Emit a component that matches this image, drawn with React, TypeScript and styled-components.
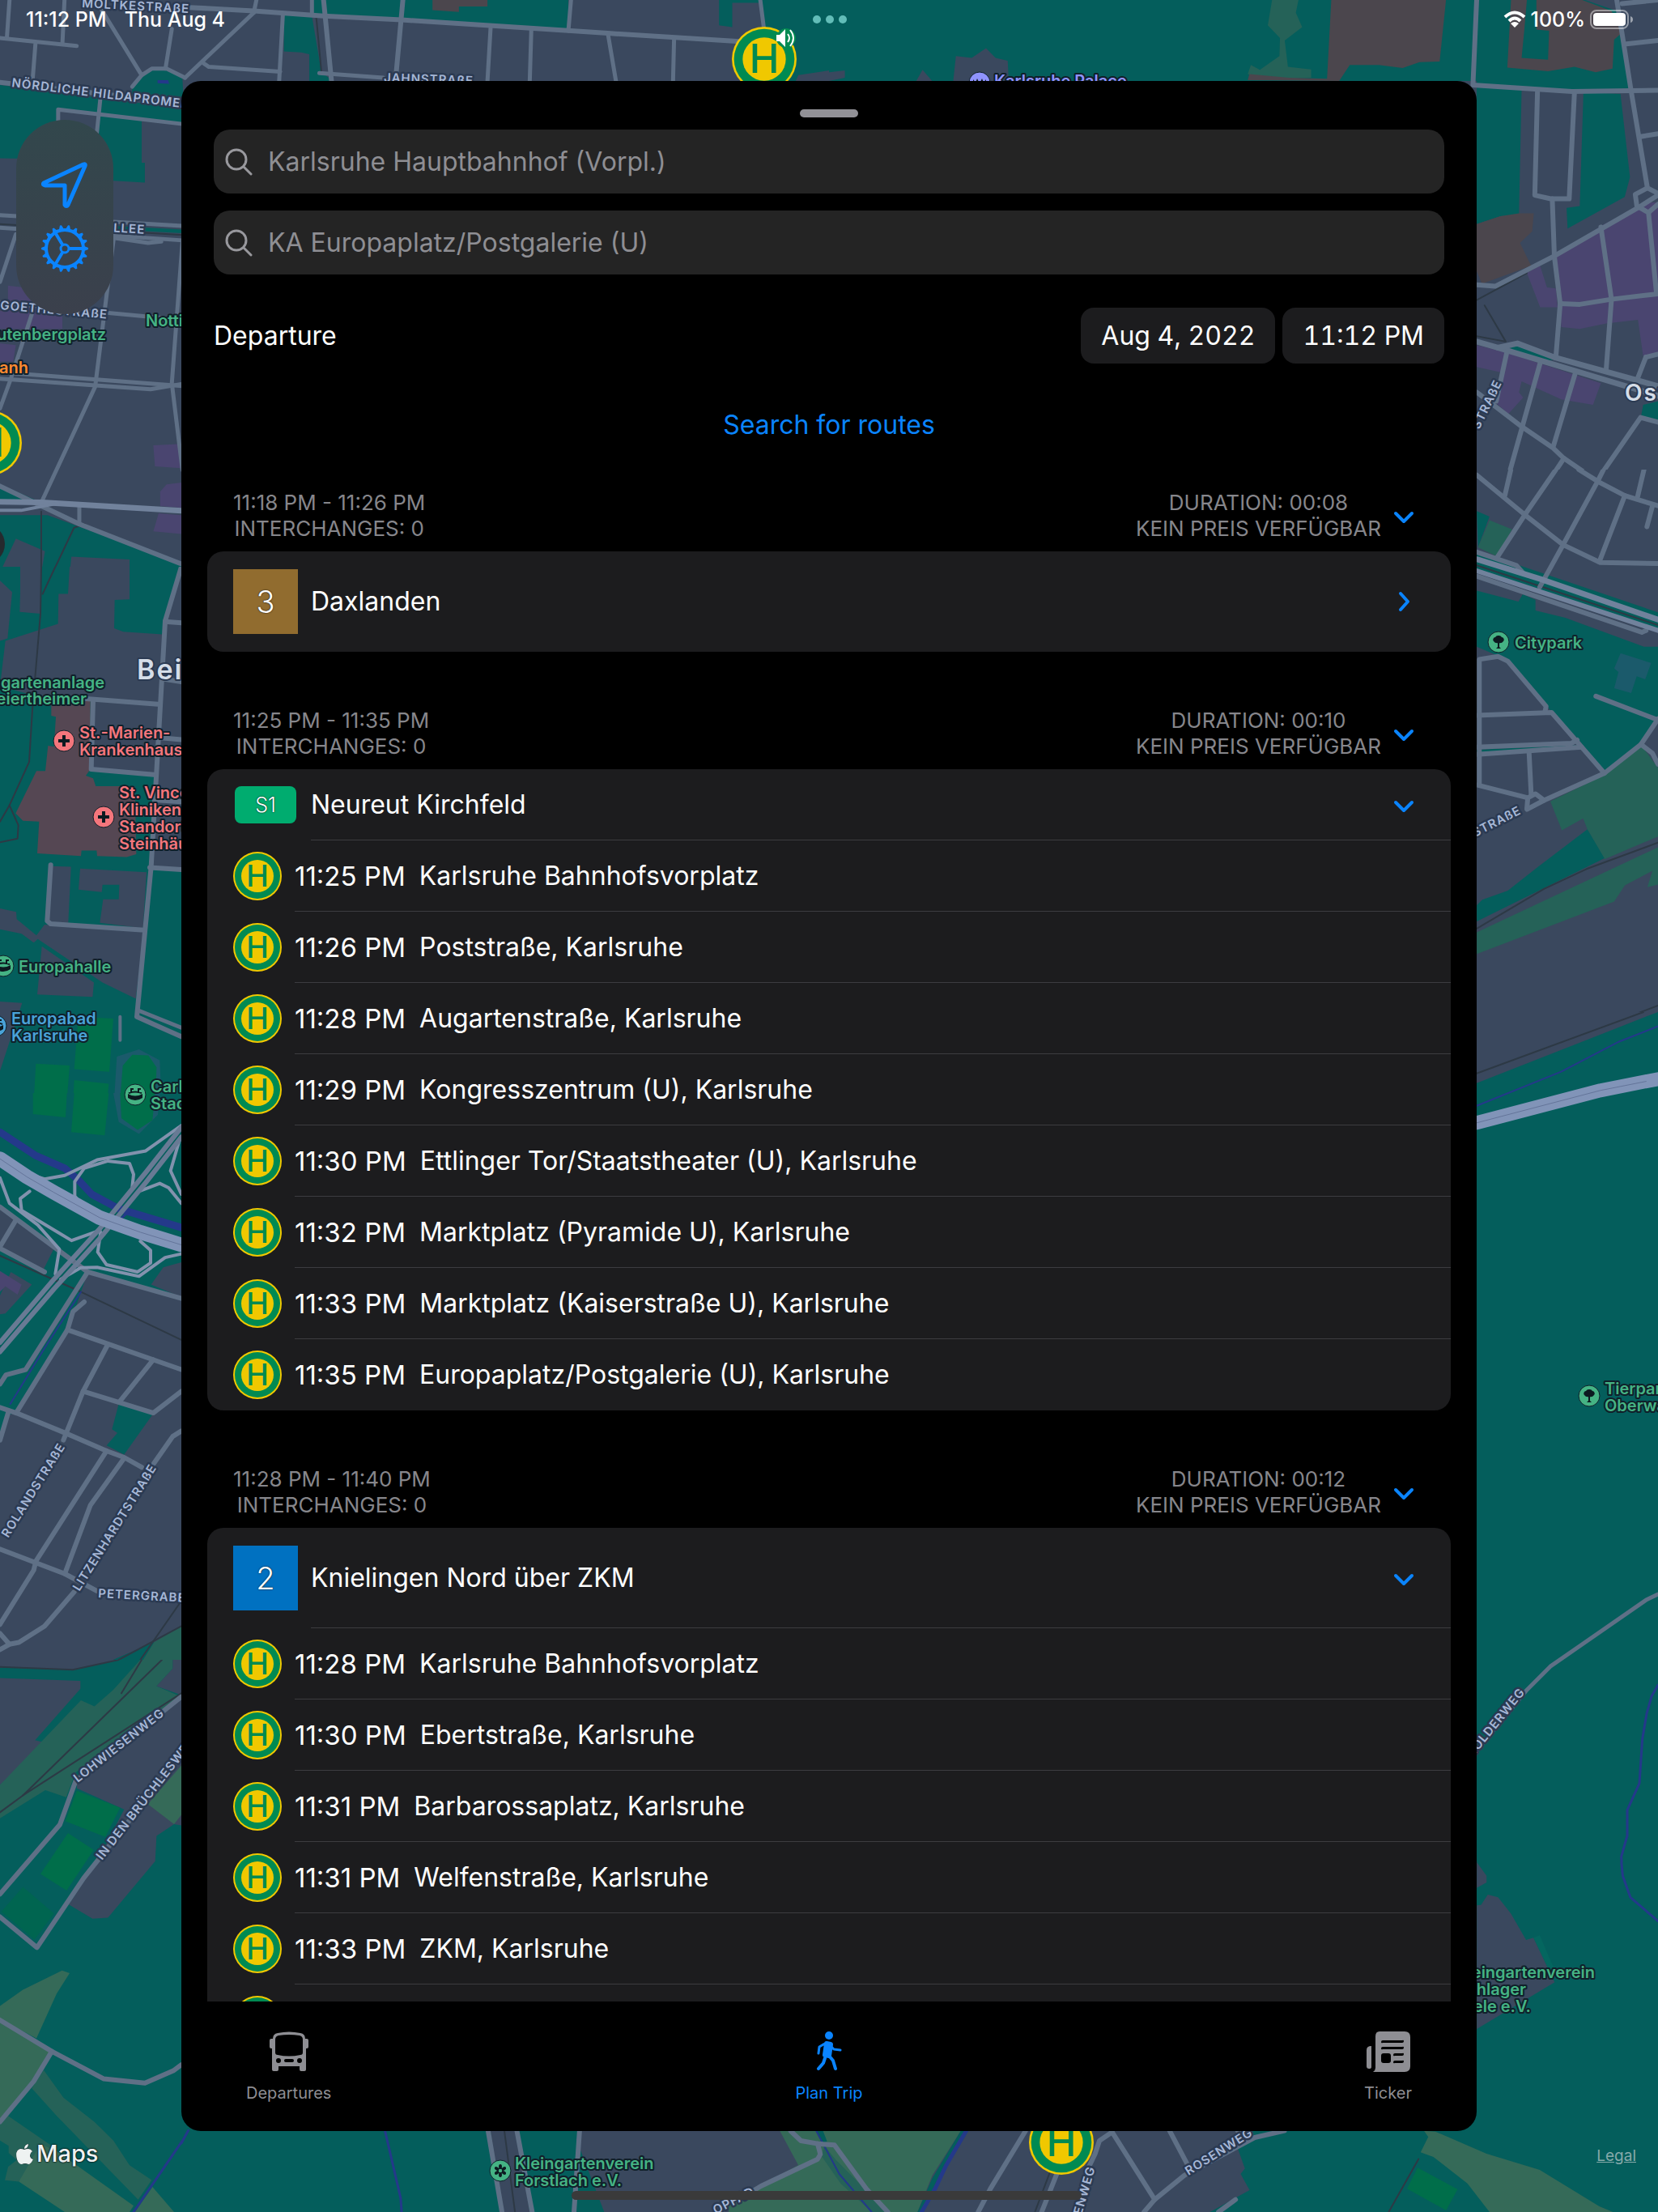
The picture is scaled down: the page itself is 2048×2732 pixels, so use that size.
import React, { useState } from "react";
import styled, { createGlobalStyle } from "styled-components";

/* ---------- palette ---------- */

const c = {
  blue: "#0a84ff",
  grey: "#8e8e93",
  card: "#1c1c1e",
  line: "#3c3c40",
  land: "#3a485e",
  park: "#045e5c",
  road: "#5f7086",
  meadow: "#356a58",
  grove: "#256258",
  pitch: "#006e4a",
  shop: "#4a4570",
  brown: "#4b464d",
  hospital: "#554753",
  track: "#1b5a6b",
  motorway: "#8194b8",
  ramp: "#8292ad",
  water: "#24398a",
  rail: "#2d3945",
};

const GlobalStyle = createGlobalStyle`
  *, *::before, *::after { box-sizing: border-box; }
  body {
    margin: 0;
    background: ${c.land};
    color: #fff;
    font-family: Inter, "Liberation Sans", sans-serif;
  }
  button, input { font: inherit; color: inherit; }
  button { background: none; border: 0; padding: 0; cursor: pointer; }
`;

/* ---------- map ---------- */

type Area = [fill: string, points: string];
type Line = [stroke: string, width: number, points: string];
type TileData = {
  x: number;
  y: number;
  w: number;
  h: number;
  vw: number;
  vh: number;
  base: string;
  areas: Area[];
  lines: Line[];
};

const roads = (width: number, ...points: string[]): Line[] => points.map((p) => [c.road, width, p]);
const ramps = (...points: string[]): Line[] => points.map((p) => [c.ramp, 4, p]);
const rails = (...points: string[]): Line[] => points.map((p) => [c.rail, 2, p]);

const tiles: TileData[] = [
  {
    x: 0, y: 0, w: 1024, h: 700, vw: 1568, vh: 1568, base: c.land,
    areas: [
      [c.park, "0,235 345,300 345,345 268,335 268,450 274,450 274,505 215,500 185,480 185,315 110,303 108,440 0,438"],
      [c.park, "250,245 262,215 285,195 315,190 345,215 348,300 250,270"],
      [c.park, "590,0 1075,0 1075,82 590,42"],
      [c.park, "537,40 590,45 608,200 630,224 585,224 585,150 570,145 537,142"],
      [c.park, "1325,0 1568,0 1568,224 1445,224 1445,90 1440,8 1385,8 1385,75 1360,70 1360,0"],
      [c.land, "1510,208 1568,195 1568,224 1505,224"],
      [c.brown, "818,0 922,0 922,18 868,18 868,33 818,28"],
      [c.water, "298,222 318,222 320,232 298,230"],
      [c.park, "215,625 345,635 345,645 215,635"],
      [c.park, "0,1340 70,1385 0,1385"],
      [c.park, "0,1425 90,1425 343,1560 343,1568 0,1568"],
      [c.land, "30,1490 85,1525 80,1568 5,1568"],
      [c.land, "135,1540 245,1548 245,1568 133,1568"],
      [c.shop, "15,790 75,800 118,870 118,910 0,910 0,860 15,850"],
      [c.shop, "0,950 30,955 25,1000 0,1000"],
      [c.shop, "290,1232 343,1228 343,1295 293,1290"],
      [c.shop, "315,1340 343,1335 343,1405 303,1400 303,1360"],
      [c.shop, "300,1420 343,1425 343,1477 290,1470"],
    ],
    lines: [
      ...rails("0,620 345,650", "78,1415 78,1568", "105,1568 140,1460 160,1450", "598,45 608,200"),
      ...roads(5,
        "0,105 145,127", "18,0 13,105", "122,0 118,122", "67,122 62,215", "190,22 268,208", "325,80 313,190",
        "480,35 350,215", "385,175 395,185 530,198", "485,0 480,35", "250,240 268,208 287,190 315,190 350,215",
        "535,40 528,224", "604,202 725,215", "928,75 922,224", "1005,80 1002,224", "1080,0 1075,85",
        "1150,95 1165,224", "1275,105 1273,224", "1438,0 1445,80", "110,340 110,303 345,343", "190,270 183,370",
        "0,595 345,625", "0,630 345,665", "215,658 280,672 305,668", "30,648 0,780", "0,838 345,885",
        "215,660 180,1070 75,1400", "345,670 325,1060 345,1300", "0,1030 345,1068", "0,1048 285,1077 345,1062",
        "60,870 20,1050 0,1130", "150,1400 150,1450", "590,0 590,40"),
      ...roads(6, "350,20 480,30 612,44 760,55 1080,85 1150,92 1400,115", "0,228 345,285", "612,0 615,44 627,224",
        "762,0 748,224", "0,1345 150,1450 343,1560"),
      ["#71829c", 7, "0,1388 80,1390 343,1413"],
      ["#71829c", 4, "0,1412 40,1412 110,1392"],
    ],
  },
  {
    x: 1024, y: 0, w: 1024, h: 700, vw: 1568, vh: 1568, base: c.land,
    areas: [
      [c.park, "0,0 1430,0 1490,30 1515,250 1310,250 1305,595 1270,598 1225,620 1225,224 0,224"],
      [c.land, "240,155 270,160 297,133 315,160 338,168 340,224 235,224"],
      [c.land, "0,200 30,195 30,215 0,224"],
      [c.land, "165,224 177,193 195,224"],
      [c.grove, "838,0 888,0 883,35 895,75 862,112 868,185 912,192 912,215 830,218 792,205 798,180 815,193 852,155 853,105 830,70"],
      [c.brown, "950,0 1167,0 1155,170 1117,172 1085,188 1040,180 985,180 965,224 792,222 795,205 870,215 942,218"],
      [c.brown, "1290,0 1320,0 1315,85 1310,160 1360,165 1362,85 1338,82 1338,0 1425,0 1480,30 1500,90 1485,110 1482,190 1450,200 1410,185 1360,197 1283,187"],
      [c.park, "1427,255 1497,260 1515,490 1505,545 1397,632 1395,575 1420,570"],
      [c.brown, "1225,620 1270,598 1305,590 1333,590 1330,640 1307,672 1328,735 1235,785 1225,750"],
      [c.shop, "1568,560 1545,560 1460,625 1375,710 1383,840 1385,905 1420,910 1470,895 1530,885 1540,985 1568,975"],
      [c.shop, "1320,755 1345,735 1358,795 1375,798 1378,850 1345,850"],
      [c.shop, "1225,955 1280,975 1460,1060 1445,1120 1385,1105 1310,1055 1305,1085 1313,1100 1285,1145 1262,1115 1270,1030 1225,1015"],
      [c.park, "1275,955 1300,955 1370,995 1345,1000"],
      [c.park, "1540,1120 1568,1110 1568,1170 1535,1160"],
    ],
    lines: [
      ...rails("1225,830 1320,755", "1240,845 1280,945 1225,930"),
      ...roads(6,
        "1225,0 1218,235 1405,253 1568,250", "1340,255 1335,540 1365,550 1400,550 1410,255",
        "1368,550 1372,710 1383,840 1375,985", "1490,0 1517,250 1548,520 1568,535", "1500,10 1568,0",
        "1505,122 1568,112", "1535,378 1568,370", "1225,788 1260,792 1372,708 1530,575 1568,540",
        "1548,520 1525,538 1528,570 1550,588 1568,565", "1460,628 1480,828 1470,1022", "1550,588 1565,810",
        "1383,840 1420,842 1480,828 1568,813", "1545,988 1568,980", "1545,988 1530,1045", "1282,975 1262,1110",
        "1345,1005 1275,1370", "1412,1030 1370,1235", "1225,1085 1310,1180 1370,1240 1390,1268 1452,1330 1568,1395",
        "1390,1268 1265,1545", "1225,1315 1275,1370 1390,1505", "1568,1168 1535,1155 1452,1330"),
      ...roads(7, "1225,945 1265,962 1568,1095", "1265,962 1302,950 1375,990 1568,1068"),
    ],
  },
  {
    x: 1224, y: 580, w: 824, h: 700, vw: 1568, vh: 1568, base: c.land,
    areas: [
      [c.park, "1142,115 1172,130 1145,215"],
      [c.grove, "1172,140 1225,165 1190,240 1145,215"],
      [c.park, "1142,222 1235,262 1568,395 1568,445 1142,285"],
      [c.park, "1142,335 1240,365 1250,345 1280,360 1280,390 1350,410 1535,490 1568,490 1568,680 1528,760 1442,838 1380,745 1320,675 1305,650 1215,525 1192,515 1142,490"],
      [c.track, "1480,508 1552,535 1538,580 1518,572 1505,618 1465,605 1475,560 1465,550"],
      [c.grove, "1315,918 1442,845 1530,765 1568,825 1568,1015 1442,1078 1402,995 1392,965 1342,998"],
      [c.park, "1402,995 1442,1075 1142,1250 1142,1205 1155,1190 1215,1165 1285,1100"],
      [c.grove, "1568,1045 1142,1280 1142,1340 1465,1195 1490,1150 1555,1110 1543,1155 1568,1148"],
      [c.park, "1410,1568 1568,1500 1568,1568"],
      [c.park, "1142,775 1380,762 1380,772 1142,785"],
    ],
    lines: [
      ...rails("1142,265 1568,430", "1142,1270 1300,1160 1400,1105 1568,1032", "1375,1568 1568,1483"),
      [c.water, 2, "1500,1568 1568,1540"],
      ...roads(6,
        "1142,15 1255,125 1345,208 1432,257 1568,260", "1222,0 1208,72", "1328,0 1255,125 1190,243",
        "1382,0 1430,35 1490,72 1568,100", "1440,0 1425,35 1345,208 1290,325", "1535,0 1520,75", "1490,72 1430,255",
        "1555,100 1542,158", "1148,870 1148,525 1192,517 1215,530 1305,655 1302,672",
        "1142,680 1318,672 1442,840 1300,915 1260,940", "1142,768 1365,757 1378,748", "1142,788 1388,768",
        "1265,785 1270,900", "1142,872 1262,908 1260,935", "1262,908 1280,897 1300,915",
        "1442,840 1528,760 1555,785 1568,815", "1528,760 1568,690", "1422,627 1562,690",
        "1142,228 1235,265 1250,285", "1142,295 1530,450 1540,445"),
      ["#71829c", 7, "1142,248 1290,302 1568,415"],
      ["#71829c", 6, "1142,280 1568,445"],
    ],
  },
  {
    x: 0, y: 700, w: 260, h: 700, vw: 780, vh: 1568, base: c.park,
    areas: [
      [c.land, "0,38 45,70 28,198 0,205"],
      [c.land, "75,0 150,0 150,130 73,125 75,70"],
      [c.land, "20,205 215,158 217,75 252,75 258,0 480,0 480,90 425,92 423,170 457,180 603,187 672,0 780,0 780,840 555,835 575,575 335,560 340,370 190,370 0,330"],
      [c.hospital, "190,372 335,372 335,560 318,578 345,585 355,607 500,607 505,795 470,803 360,800 358,785 302,785 300,800 138,793 145,705 85,703 58,682 135,565 168,565 178,495 200,498 207,415 190,412"],
      [c.park, "355,588 420,572 572,578 565,640 500,607 355,607"],
      [c.land, "187,828 263,830 253,985 185,985 175,980"],
      [c.land, "297,835 543,845 530,1000 370,985 382,920 440,920 442,880 380,880 377,900 291,893"],
      [c.land, "0,945 60,955 62,975 135,1020 165,990 535,1005 503,1195 380,1150 140,1030 125,1040 80,1015 0,1003"],
      [c.land, "155,1050 348,1150 343,1190 138,1183"],
      [c.land, "0,1203 82,1207 0,1395"],
      [c.pitch, "290,1245 420,1250 405,1397 275,1390"],
      [c.pitch, "133,1375 258,1380 243,1523 122,1515"],
      [c.pitch, "275,1420 403,1430 388,1568 264,1568"],
      [c.track, "515,1335 592,1365 595,1420 585,1500 570,1568 430,1568 420,1510 433,1355"],
      [c.pitch, "490,1350 550,1352 580,1385 575,1520 550,1550 510,1558 450,1530 443,1490 455,1380"],
    ],
    lines: [
      ...rails("153,0 150,130 120,395 108,540 35,660 0,705", "205,0 158,75", "35,660 68,715 65,752 0,762"),
      ...roads(6,
        "672,0 612,150 560,830 507,1245 672,1300", "612,152 672,155", "600,310 672,318", "320,365 585,380",
        "345,368 338,560 570,575", "580,472 672,478", "572,645 672,650", "555,832 672,838",
        "188,825 175,980 188,988 535,1005"),
      ...roads(5, "515,1228 672,1275"),
      ...roads(4, "445,1245 445,1310"),
    ],
  },
  {
    x: 0, y: 1350, w: 260, h: 700, vw: 780, vh: 1568, base: c.park,
    areas: [
      [c.pitch, "122,0 248,0 243,67 122,58"],
      [c.pitch, "275,0 403,0 388,117 264,108"],
      [c.track, "420,0 593,0 585,60 515,113 440,80"],
      [c.pitch, "445,0 575,0 565,75 510,102 450,70"],
      [c.land, "60,345 200,430 160,490 0,430 0,320"],
      [c.land, "0,560 40,495 118,530 20,610 0,612"],
      [c.shop, "0,492 80,530 65,558 20,535 0,550"],
      [c.land, "672,468 605,482 560,530 672,565"],
      [c.land, "325,495 780,590 780,1460 570,1520 420,1568 0,1568 0,960 35,890 55,885 255,650"],
      [c.park, "440,860 565,890 460,1000 395,975 435,940 415,930"],
      [c.grove, "672,1475 570,1520 530,1568 672,1568"],
      [c.park, "570,1520 530,1568 420,1568"],
    ],
    lines: [
      ...rails("0,450 300,550 672,683", "440,1568 672,1475", "672,1405 520,1568"),
      [c.water, 9, "0,108 130,172 240,208 290,240 340,280 440,320 672,372"],
      [c.water, 2, "300,550 170,700 38,860"],
      [c.water, 3, "445,350 480,325"],
      ...roads(6,
        "0,315 325,495 672,568", "60,350 0,425", "0,430 165,495", "325,495 95,765 22,780 0,805",
        "312,578 270,605 250,655 60,885 0,870", "250,655 672,765", "400,695 308,825 235,960", "568,738 442,855",
        "308,825 568,885 672,825", "30,885 0,960", "60,885 240,940 395,990 460,1008 525,1035",
        "395,990 133,1295 125,1320 0,1470", "460,1010 335,1140 240,1330", "0,1262 240,1330 360,1378",
        "570,1025 640,950 672,935", "275,1380 165,1475 70,1520 35,1525 0,1540", "0,1495 35,1525"),
      ...ramps(
        "110,225 165,238 240,228 360,185 540,160 672,90", "400,188 312,208 277,245 277,285 305,310",
        "400,188 480,195 495,225 490,260", "110,272 75,292 80,325 265,408 370,380",
        "0,235 35,305 140,365 220,432 205,500", "373,385 362,440 395,475 510,495 558,470 558,435 520,410",
        "225,515 300,483 360,482 515,507 612,455 672,445", "665,130 632,215 672,280", "515,272 592,250 625,262 672,305"),
      ["#687a94", 6, "672,95 540,220 370,375 200,515 0,690"],
      ["#687a94", 6, "672,122 540,248 370,402 200,542 0,716"],
      [c.motorway, 18, "0,182 100,232 200,275 370,345 520,385 672,420"],
      ["#64759a", 1, "0,182 100,232 200,275 370,345 520,385 672,420"],
    ],
  },
  {
    x: 0, y: 2050, w: 260, h: 682, vw: 780, vh: 1568, base: c.park,
    areas: [
      [c.land, "0,0 440,0 270,28 0,22"],
      [c.land, "0,52 298,60 298,82 130,228 165,235 0,355"],
      [c.grove, "520,0 640,0 640,25 580,75 672,105 600,140 280,320 245,390 168,370 0,450 0,355 300,115 350,132 420,85"],
      [c.land, "640,0 780,0 780,90 672,100 580,75 640,25"],
      [c.land, "600,140 672,108 672,470 645,467 580,500 575,572 400,732 343,735 255,695 365,565 460,425 285,365 285,330"],
      [c.meadow, "672,300 548,410 645,467 672,440"],
      [c.pitch, "285,372 445,420 390,503 242,458"],
      [c.pitch, "252,492 347,540 247,655 150,608"],
      ["#006550", "85,645 200,720 128,795 5,715"],
      [c.meadow, "0,983 85,937 230,882 258,890 210,948 135,1075 0,1020"],
      [c.meadow, "0,1030 190,1110 125,1195 0,1310"],
      [c.grove, "162,1165 235,1243 350,1312 420,1365 480,1435 562,1477 512,1533 210,1295 118,1217"],
      [c.grove, "30,1295 210,1390 70,1482 18,1478 30,1440 62,1420 32,1400 32,1380 0,1365 0,1320"],
      [c.meadow, "210,1395 495,1550 480,1568 240,1568 70,1482 150,1375"],
      [c.meadow, "565,1497 645,1568 500,1568"],
    ],
    lines: [
      ...rails("0,20 270,28 440,0", "600,0 85,385 0,433", "672,95 85,385", "525,0 450,95"),
      [c.water, 3, "780,1240 672,1370 495,1568"],
      ...roads(6,
        "672,105 280,345 222,468 0,665", "672,270 310,620 137,817 0,730",
        "0,1023 192,1112 385,1190 537,1202 642,1167 672,1150", "192,1112 125,1197 0,1312"),
    ],
  },
  {
    x: 1800, y: 1250, w: 248, h: 1100, vw: 744, vh: 1568, base: c.park,
    areas: [
      [c.land, "72,0 744,0 700,8 72,125"],
      [c.land, "72,1495 108,1525 108,1535 72,1545"],
      [c.land, "95,1568 115,1553 155,1557 165,1568"],
    ],
    lines: [
      ...rails("72,108 690,0"),
      [c.water, 2, "72,165 385,105 600,52 744,25"],
      [c.water, 3, "744,1185 720,1205 702,1235 686,1280 675,1358 630,1405 630,1450 608,1487 613,1522 640,1555 665,1568"],
      ...roads(5, "72,1300 255,1195 345,1152 700,1035 744,1025"),
      [c.motorway, 17, "72,195 530,138 700,122 744,118"],
      ["#64759a", 1, "72,195 530,138 700,122"],
    ],
  },
  {
    x: 1224, y: 2300, w: 824, h: 432, vw: 1568, vh: 1296, base: c.park,
    areas: [
      [c.land, "1142,0 1165,50 1165,75 1142,95"],
      ["#04665f", "1275,280 1290,270 1325,400 1318,420"],
      [c.land, "1142,160 1152,158 1168,120 1192,130 1222,190 1258,288 1275,280 1325,445 1142,618"],
      [c.land, "0,995 590,995 580,1060 597,1135 587,1155 608,1215 515,1296 0,1296"],
      [c.meadow, "1018,995 1045,998 1165,1080 1290,1140 1430,1275 1462,1296 1172,1296 1120,1190 1040,1092 1010,1075 1028,1018"],
      [c.pitch, "1003,1132 1097,1212 1070,1290 978,1210"],
    ],
    lines: [
      [c.water, 3, "1482,0 1485,50 1503,130 1568,218"],
      ...rails("1005,1100 935,1296"),
      ...roads(6,
        "80,995 0,1215", "285,1000 385,1250 360,1296", "285,1000 255,1032 245,1080 180,1296", "420,995 462,1120",
        "690,995 620,1020 455,1160 385,1250", "580,995 590,1015", "575,1250 535,1296"),
    ],
  },
  {
    x: 224, y: 1780, w: 900, h: 952, vw: 1568, vh: 1568, base: c.park,
    areas: [
      [c.land, "860,1402 1290,1402 1330,1475 1235,1568 910,1568 850,1420"],
      [c.land, "665,1402 720,1402 750,1568 690,1568"],
    ],
    lines: [
      ...rails("695,1402 718,1568"),
      [c.water, 3, "438,1402 472,1540 474,1568"],
      [c.water, 3, "15,1402 0,1428"],
      ...roads(6, "660,1402 690,1568", "722,1402 755,1568", "857,1402 845,1568"),
    ],
  },
  {
    x: 900, y: 2600, w: 440, h: 132, vw: 1320, vh: 396, base: c.land,
    areas: [
      [c.meadow, "190,96 860,96 755,260 700,396 0,396 0,370 120,300 258,222"],
      [c.grove, "355,150 395,200 590,396 530,396 415,290 345,190"],
      [c.park, "325,96 350,96 365,135 345,140"],
      [c.park, "860,96 888,96 810,225 720,396 700,396 755,270"],
    ],
    lines: [
      [c.water, 2, "325,96 410,255 530,396"],
      [c.water, 5, "880,96 805,225 765,310 715,396"],
      ...roads(6,
        "230,96 268,132 330,143 392,148 510,310 590,396", "330,143 340,182 330,200 120,300 70,330",
        "1100,96 970,310 925,396", "1218,250 1160,396"),
      ...rails("1190,250 1135,396"),
    ],
  },
];

const MapSvg = styled.svg`
  position: absolute;
  inset: 0;
  width: 100%;
  height: 100%;

  polyline {
    fill: none;
    stroke-linecap: round;
    stroke-linejoin: round;
    vector-effect: non-scaling-stroke;
  }
`;

const Street = styled.text`
  font-size: 15px;
  font-weight: 600;
  letter-spacing: 1px;
  fill: #a6b7d6;
  stroke: #2b3a52;
  stroke-width: 5px;
  stroke-linejoin: round;
  paint-order: stroke;
`;

const Place = styled.text<{ $tone: string }>`
  font-size: 20px;
  font-weight: 600;
  fill: ${(p) => p.$tone};
  stroke: #10202a;
  stroke-width: 4px;
  stroke-linejoin: round;
  paint-order: stroke;
`;

const District = styled.text<{ $size: number }>`
  font-size: ${(p) => p.$size}px;
  font-weight: 600;
  letter-spacing: 2px;
  fill: #d5dde8;
  stroke: #2b3a52;
  stroke-width: 4px;
  stroke-linejoin: round;
  paint-order: stroke;
`;

const SignLetter = styled.text`
  font-size: 37px;
  font-weight: 500;
  fill: #008a52;
  text-anchor: middle;
`;

function StopShape() {
  return (
    <>
      <circle cx="30" cy="30" r="30" fill="#f0c800" />
      <circle cx="30" cy="30" r="28" fill="#008a52" />
      <circle cx="30" cy="30" r="20" fill="#f0c800" />
      <SignLetter x="30" y="43">H</SignLetter>
    </>
  );
}

function MapStop({ x, y }: { x: number; y: number }) {
  return (
    <svg x={x - 40} y={y - 40} width="80" height="80" viewBox="0 0 60 60">
      <StopShape />
    </svg>
  );
}

const street: [string, number, number, number][] = [
  ["MOLTKESTRAßE", 101, 9, 3],
  ["NÖRDLICHE HILDAPROMENADE", 14, 107, 7],
  ["JAHNSTRAßE", 474, 101, 2],
  ["ALLEE", 128, 286, 3],
  ["GOETHESTRAßE", 0, 382, 5],
  ["STRAßE", 1827, 531, -64],
  ["STRAßE", 1822, 1034, -27],
  ["HOLDERWEG", 1818, 2172, -51],
  ["ROSENWEG", 1468, 2687, -32],
  ["ENWEG", 1336, 2736, -74],
  ["OPFAD", 884, 2735, -27],
  ["ROLANDSTRAßE", 10, 1900, -58],
  ["LITZENHARDTSTRAßE", 98, 1966, -58],
  ["PETERGRABEN", 121, 1973, 3],
  ["LOHWIESENWEG", 96, 2202, -38],
  ["IN DEN BRÜCHLESWEG", 126, 2298, -52],
];

const green = "#45b384";
const red = "#f4767c";
const sky = "#4aa3d8";

const places: [string, number, number, string, ("start" | "end")?][] = [
  ["Gutenbergplatz", 131, 420, green, "end"],
  ["Nottingham", 180, 403, green],
  ["Hanh", 35, 461, "#ff8a30", "end"],
  ["Kleingartenanlage", 129, 850, green, "end"],
  ["Beiertheimer", 107, 870, green, "end"],
  ["St.-Marien-", 98, 912, red],
  ["Krankenhaus", 98, 933, red],
  ["St. Vincentius-", 147, 986, red],
  ["Kliniken", 147, 1007, red],
  ["Standort", 147, 1028, red],
  ["Steinhäuser", 147, 1049, red],
  ["Europahalle", 23, 1201, green],
  ["Europabad", 14, 1265, sky],
  ["Karlsruhe", 14, 1286, sky],
  ["Carl-", 186, 1349, green],
  ["Stadion", 186, 1370, green],
  ["Citypark", 1871, 801, green],
  ["Tierpark", 1982, 1722, green],
  ["Oberwald", 1982, 1743, green],
  ["Kleingartenverein", 1970, 2443, green, "end"],
  ["Schlager", 1885, 2464, green, "end"],
  ["Seele e.V.", 1891, 2485, green, "end"],
  ["Kleingartenverein", 636, 2679, green],
  ["Forstlach e.V.", 636, 2700, green],
  ["Karlsruhe Palace", 1228, 107, "#8f93ff"],
];

function Pin({ x, y, tone, children }: { x: number; y: number; tone: string; children: React.ReactNode }) {
  return (
    <g transform={`translate(${x} ${y})`} fill="#0c1a20">
      <circle r="13" fill={tone} stroke="#10202a" strokeWidth="1" />
      {children}
    </g>
  );
}

const tree = <path d="M-1 1h2v5l2 2h-6l2-2z M0-8a4 4 0 0 1 4 2a3 3 0 0 1 2 5q-2 3-6 2q-4 1-6-2a3 3 0 0 1 2-5a4 4 0 0 1 4-2z" />;
const cross = <path d="M-2-7h4v5h5v4h-5v5h-4v-5h-5v-4h5z" />;
const stadium = (
  <>
    <path d="M-9-1Q0 4 9-1V4Q0 10-9 4Z" />
    <path d="M-8-2Q0-5 8-2M-5-2V-7H-2M4-2V-7H7" fill="none" stroke="#0c1a20" strokeWidth="2" />
  </>
);
const flower = (
  <>
    {[0, 60, 120, 180, 240, 300].map((a) => (
      <ellipse key={a} cx="0" cy="-5" rx="2" ry="3" transform={`rotate(${a})`} />
    ))}
    <circle r="3" fill="none" stroke="#0c1a20" />
  </>
);

function CityMap() {
  return (
    <MapSvg viewBox="0 0 2048 2732" preserveAspectRatio="xMidYMid slice" aria-label="Map of Karlsruhe">
      {tiles.map((t) => (
        <svg key={`${t.x}-${t.y}`} x={t.x} y={t.y} width={t.w} height={t.h} viewBox={`0 0 ${t.vw} ${t.vh}`} preserveAspectRatio="none">
          <rect width={t.vw} height={t.vh} fill={t.base} />
          {t.areas.map(([fill, points], i) => (
            <polygon key={i} points={points} fill={fill} />
          ))}
          {t.lines.map(([stroke, width, points], i) => (
            <polyline key={i} points={points} stroke={stroke} strokeWidth={width} />
          ))}
        </svg>
      ))}
      {street.map(([label, x, y, turn]) => (
        <Street key={`${label}${y}`} transform={`translate(${x} ${y}) rotate(${turn})`}>{label}</Street>
      ))}
      {places.map(([label, x, y, tone, anchor]) => (
        <Place key={`${label}${y}`} x={x} y={y} $tone={tone} textAnchor={anchor}>{label}</Place>
      ))}
      <District x="169" y="839" $size={34}>Beiertheim</District>
      <District x="2007" y="495" $size={28}>Oststadt</District>
      <Pin x={1851} y={793} tone={green}>{tree}</Pin>
      <Pin x={1963} y={1724} tone={green}>{tree}</Pin>
      <Pin x={79} y={915} tone={red}>{cross}</Pin>
      <Pin x={128} y={1009} tone={red}>{cross}</Pin>
      <Pin x={4} y={1193} tone={green}>{stadium}</Pin>
      <Pin x={167} y={1352} tone={green}>{stadium}</Pin>
      <Pin x={-5} y={1267} tone={sky}>{stadium}</Pin>
      <Pin x={618} y={2681} tone={green}>{flower}</Pin>
      <Pin x={1210} y={102} tone="#8f93ff"><path d="M-8 5v-9l3 4 2-5 3 6 3-6 2 5 3-4v9z" /></Pin>
      <MapStop x={944} y={73} />
      <g>
        <circle cx="971" cy="47" r="12" fill="#008a52" />
        <path d="M959 43h4l7-7v22l-7-7h-4z" fill="#fff" />
        <path d="M973 42q4 5 0 10M976 37q8 10 0 20" fill="none" stroke="#fff" strokeWidth="2" />
      </g>
      <MapStop x={-13} y={547} />
      <circle cx="-18" cy="672" r="24" fill="#262a2e" />
      <MapStop x={1311} y={2646} />
    </MapSvg>
  );
}

/* ---------- screen frame ---------- */

const Screen = styled.div`
  position: relative;
  display: flex;
  flex-direction: column;
  height: 100vh;
  overflow: hidden;
`;

const StatusBar = styled.header`
  position: relative;
  display: grid;
  grid-template-columns: 1fr auto 1fr;
  align-items: start;
  height: 100px;
  padding: 8px 30px 0 32px;
  font-size: 25px;
  font-weight: 500;
  line-height: 32px;
`;

const StatusGroup = styled.div<{ $gap: number; $end?: boolean }>`
  display: flex;
  align-items: center;
  justify-content: ${(p) => (p.$end ? "flex-end" : "flex-start")};
  gap: ${(p) => p.$gap}px;
  height: 32px;
`;

const Dot = styled.span`
  width: 10px;
  height: 10px;
  border-radius: 50%;
  background: #62bdb8;
`;

const Main = styled.main`
  position: relative;
  flex: 1;
  min-height: 0;
  display: grid;
  grid-template-columns: minmax(160px, 1fr) minmax(0, 1600px) minmax(0, 1fr);
`;

const MapControls = styled.div`
  display: flex;
  flex-direction: column;
  align-items: center;
  justify-content: center;
  gap: 20px;
  justify-self: start;
  width: 120px;
  height: 240px;
  margin: 48px 0 0 20px;
  border-radius: 60px;
  background: linear-gradient(#32474c, #3b404c);

  button { display: flex; }
`;

const Footer = styled.footer`
  position: relative;
  display: grid;
  grid-template-columns: 1fr minmax(0, 630px) 1fr;
  align-items: end;
  height: 100px;
  padding: 0 27px 15px 20px;
`;

const MapsBrand = styled.span`
  display: flex;
  align-items: center;
  gap: 4px;
  padding-bottom: 41px;
  font-size: 29px;
  font-weight: 500;
  line-height: 32px;
  color: #eef2f2;
  text-shadow: 0 0 2px #000, 0 0 2px #000;
`;

const HomeBar = styled.span`
  height: 11px;
  border-radius: 6px;
  background: #3a3a3a;
`;

const LegalLink = styled.a`
  justify-self: end;
  padding-bottom: 42px;
  font-size: 19px;
  line-height: 24px;
  color: #86aaaa;
`;

/* ---------- sheet ---------- */

const Sheet = styled.section`
  display: flex;
  flex-direction: column;
  min-height: 0;
  overflow: hidden;
  border-radius: 24px;
  background: #000;
`;

const Handle = styled.div`
  flex: none;
  width: 72px;
  height: 10px;
  margin: 35px auto 15px;
  border-radius: 5px;
  background: #929197;
`;

const Scroll = styled.div`
  flex: 1;
  min-height: 0;
  overflow-y: auto;
  scrollbar-width: none;
`;

const Form = styled.form`
  display: flex;
  flex-direction: column;
  padding: 0 40px;
  font-size: 32px;
  line-height: 44px;
`;

const Field = styled.label`
  display: flex;
  align-items: center;
  gap: 19px;
  height: 79px;
  margin-bottom: 21px;
  padding: 0 16px 0 14px;
  border-radius: 20px;
  background: #242424;
  color: #98989d;
`;

const FieldInput = styled.input`
  flex: 1;
  min-width: 0;
  padding: 0;
  border: 0;
  outline: 0;
  background: none;
  color: #8e8e93;
`;

const WhenRow = styled.div`
  display: flex;
  align-items: center;
  gap: 9px;
  margin-top: 20px;
`;

const WhenLabel = styled.span`
  flex: 1;
`;

const Pill = styled.button`
  height: 69px;
  padding: 0 25px;
  border-radius: 16px;
  background: ${c.card};
  font-variant-numeric: tabular-nums;
`;

const SearchButton = styled.button`
  align-self: center;
  height: 64px;
  margin: 44px 0 48px;
  color: ${c.blue};
`;

const Trips = styled.div`
  display: flex;
  flex-direction: column;
  gap: 69px;
  padding: 0 32px;
`;

const TripHeader = styled.div`
  display: flex;
  align-items: center;
  justify-content: space-between;
  padding: 0 44px 12px 32px;
  font-size: 26px;
  line-height: 32px;
  text-align: center;
  color: #86868b;
`;

const TripFacts = styled.div`
  display: flex;
  align-items: center;
  gap: 14px;

  button { display: flex; }
`;

const Card = styled.div`
  overflow: hidden;
  padding-left: 32px;
  border-radius: 20px;
  background: ${c.card};
  font-size: 32px;
  line-height: 44px;
`;

const LegRow = styled.button<{ $tall: boolean }>`
  display: flex;
  align-items: center;
  gap: 16px;
  width: 100%;
  height: ${(p) => (p.$tall ? 124 : 88)}px;
  text-align: left;
`;

const BadgeBox = styled.span`
  flex: none;
  display: flex;
  justify-content: center;
  width: 80px;
`;

const Badge = styled.span<{ $color: string; $small: boolean }>`
  display: flex;
  align-items: center;
  justify-content: center;
  width: ${(p) => (p.$small ? 76 : 80)}px;
  height: ${(p) => (p.$small ? 46 : 80)}px;
  border-radius: ${(p) => (p.$small ? 8 : 0)}px;
  background: ${(p) => p.$color};
  font-size: ${(p) => (p.$small ? 25 : 38)}px;
  font-weight: 300;
  text-shadow: 0 0 2px #000;
`;

const RowBody = styled.span<{ $line: boolean }>`
  flex: 1;
  display: flex;
  align-items: center;
  justify-content: space-between;
  height: 100%;
  padding-right: 44px;
  border-bottom: ${(p) => (p.$line ? `1px solid ${c.line}` : "0")};
`;

const StopList = styled.ul`
  margin: 0;
  padding: 0;
  list-style: none;
`;

const StopRow = styled.li`
  display: flex;
  align-items: center;
  gap: 16px;
  height: 88px;
`;

const StopText = styled.span`
  flex: 1;
  display: flex;
  align-items: center;
  gap: 17px;
  height: 100%;
  border-bottom: 1px solid ${c.line};

  li:last-child > & { border-bottom: 0; }
`;

const StopTime = styled.time`
  font-size: 33px;
`;

const TabBar = styled.nav`
  flex: none;
  display: grid;
  grid-template-columns: 1fr auto 1fr;
  align-items: center;
  height: 160px;
  padding: 4px 80px 0;
`;

const Tab = styled.button<{ $active?: boolean; $side: "start" | "center" | "end" }>`
  justify-self: ${(p) => p.$side};
  display: flex;
  flex-direction: column;
  align-items: center;
  gap: 12px;
  font-size: 20px;
  line-height: 28px;
  color: ${(p) => (p.$active ? c.blue : c.grey)};
`;

/* ---------- icons ---------- */

function Chevron({ right }: { right?: boolean }) {
  return (
    <svg width="28" height="28" viewBox="0 0 28 28" fill="none" stroke={c.blue} strokeWidth="4" strokeLinecap="round" strokeLinejoin="round" aria-hidden="true">
      <path d={right ? "M10 4 19 14 10 24" : "M4 11 14 21 24 11"} />
    </svg>
  );
}

function SearchIcon() {
  return (
    <svg width="34" height="34" viewBox="0 0 34 34" fill="none" stroke="currentColor" strokeWidth="3" strokeLinecap="round" aria-hidden="true">
      <circle cx="14" cy="14" r="12" />
      <path d="M23 23 32 32" />
    </svg>
  );
}

function StopIcon() {
  return (
    <svg width="60" height="60" viewBox="0 0 60 60" aria-hidden="true">
      <StopShape />
    </svg>
  );
}

function LocationIcon() {
  return (
    <svg width="58" height="58" viewBox="0 0 58 58" fill="none" stroke={c.blue} strokeWidth="5" strokeLinejoin="round" aria-hidden="true">
      <path d="M3 27 52 4Q55 3 54 6L33 54Q31 57 29 54L29 30 5 30Q1 29 3 27Z" />
    </svg>
  );
}

function GearIcon() {
  const teeth = Array.from({ length: 18 }, (_, i) => i * 20);
  return (
    <svg width="60" height="60" viewBox="-30 -30 60 60" fill="none" stroke={c.blue} aria-hidden="true">
      <circle r="23" strokeWidth="4" />
      <circle r="5" strokeWidth="3" />
      <path d="M6 0H23M-3-5-12-20M-3 5-12 20" strokeWidth="4" />
      {teeth.map((a) => (
        <path key={a} d="M-3-24-1-29H1L3-24Z" fill={c.blue} stroke="none" transform={`rotate(${a + 10})`} />
      ))}
    </svg>
  );
}

function BusIcon() {
  return (
    <svg width="48" height="50" viewBox="0 0 48 50" fill="currentColor" aria-hidden="true">
      <path fillRule="evenodd" d="M10 2Q24-1 38 2Q44 3 44 9V9H46Q48 9 48 11V19Q48 21 46 21H45V47Q45 49 43 49H39Q37 49 37 47V43H11V47Q11 49 9 49H5Q3 49 3 47V21H2Q0 21 0 19V11Q0 9 2 9H4Q4 3 10 2ZM11 5Q7 6 7 10V26Q7 29 10 29Q24 32 38 29Q41 29 41 26V10Q41 6 37 5Q24 3 11 5ZM11 33A3 3 0 1 0 11 39A3 3 0 1 0 11 33ZM37 33A3 3 0 1 0 37 39A3 3 0 1 0 37 33ZM20 34Q18 34 18 36T20 38H28Q30 38 30 36T28 34Z" />
    </svg>
  );
}

function WalkIcon() {
  return (
    <svg width="32" height="50" viewBox="0 0 32 50" fill="none" stroke="currentColor" strokeLinecap="round" strokeLinejoin="round" aria-hidden="true">
      <circle cx="16" cy="5" r="5" fill="currentColor" stroke="none" />
      <path d="M13 15 11 29 16 30 18 16Z" strokeWidth="6" />
      <path d="M11 15 4 19 3 27M18 18 22 22 30 23" strokeWidth="3" />
      <path d="M16 30 21 36 24 46M11 33 9 39 3 46" strokeWidth="4" />
    </svg>
  );
}

function NewsIcon() {
  return (
    <svg width="54" height="50" viewBox="0 0 54 50" fill="currentColor" aria-hidden="true">
      <path d="M6 18V44Q6 46 3 46T0 43V23Q0 18 6 18Z" />
      <path fillRule="evenodd" d="M16 0H47Q54 0 54 7V43Q54 50 47 50H8Q11 48 11 45V6Q11 0 16 0ZM20 11Q18 11 18 13T20 14H44Q46 14 46 12T44 11ZM20 19Q18 19 18 21T20 22H44Q46 22 46 20T44 19ZM21 27Q18 27 18 30V36Q18 39 21 39H27Q30 39 30 36V30Q30 27 27 27ZM35 27Q33 27 33 29T35 30H44Q46 30 46 28T44 27ZM35 36Q33 36 33 38T35 39H44Q46 39 46 37T44 36Z" />
    </svg>
  );
}

function WifiIcon() {
  return (
    <svg width="28" height="22" viewBox="0 0 28 22" fill="none" stroke="#fff" strokeWidth="4" aria-hidden="true">
      <path d="M2 8Q14-3 26 8M7 13Q14 6 21 13" />
      <path d="M14 21 9 16Q14 12 19 16Z" fill="#fff" stroke="none" />
    </svg>
  );
}

function BatteryIcon() {
  return (
    <svg width="54" height="24" viewBox="0 0 54 24" aria-hidden="true">
      <rect x="1" y="1" width="46" height="22" rx="7" fill="none" stroke="#fff" strokeOpacity="0.45" strokeWidth="2" />
      <rect x="4" y="4" width="40" height="16" rx="4" fill="#fff" />
      <path d="M50 8Q53 9 53 12T50 16Z" fill="#fff" fillOpacity="0.5" />
    </svg>
  );
}

function AppleIcon() {
  return (
    <svg width="21" height="25" viewBox="0 0 21 25" fill="#eef2f2" stroke="#1c2f30" strokeWidth="1" paintOrder="stroke" aria-hidden="true">
      <path d="M15 0Q15 5 10 6Q10 1 15 0ZM10 7Q12 6 15 6Q18 6 20 9Q17 11 17 14Q17 18 21 19Q18 25 15 25Q13 24 11 24T7 25Q3 25 1 19Q-2 8 5 6Q8 6 10 7Z" />
    </svg>
  );
}

/* ---------- data ---------- */

type Stop = [time: string, name: string];
type Trip = {
  span: string;
  duration: string;
  line: string;
  color: string;
  small?: boolean;
  headsign: string;
  open: boolean;
  stops: Stop[];
};

const trips: Trip[] = [
  { span: "11:18 PM - 11:26 PM", duration: "00:08", line: "3", color: "#916c2f", headsign: "Daxlanden", open: false, stops: [] },
  {
    span: "11:25 PM - 11:35 PM", duration: "00:10", line: "S1", color: "#00ac6f", small: true, headsign: "Neureut Kirchfeld", open: true,
    stops: [
      ["11:25 PM", "Karlsruhe Bahnhofsvorplatz"],
      ["11:26 PM", "Poststraße, Karlsruhe"],
      ["11:28 PM", "Augartenstraße, Karlsruhe"],
      ["11:29 PM", "Kongresszentrum (U), Karlsruhe"],
      ["11:30 PM", "Ettlinger Tor/Staatstheater (U), Karlsruhe"],
      ["11:32 PM", "Marktplatz (Pyramide U), Karlsruhe"],
      ["11:33 PM", "Marktplatz (Kaiserstraße U), Karlsruhe"],
      ["11:35 PM", "Europaplatz/Postgalerie (U), Karlsruhe"],
    ],
  },
  {
    span: "11:28 PM - 11:40 PM", duration: "00:12", line: "2", color: "#0071c1", headsign: "Knielingen Nord über ZKM", open: true,
    stops: [
      ["11:28 PM", "Karlsruhe Bahnhofsvorplatz"],
      ["11:30 PM", "Ebertstraße, Karlsruhe"],
      ["11:31 PM", "Barbarossaplatz, Karlsruhe"],
      ["11:31 PM", "Welfenstraße, Karlsruhe"],
      ["11:33 PM", "ZKM, Karlsruhe"],
      ["11:40 PM", "Europaplatz/Postgalerie (U), Karlsruhe"],
    ],
  },
];

function TripSection({ trip }: { trip: Trip }) {
  const [open, setOpen] = useState(trip.open);
  const [shown, setShown] = useState(true);
  return (
    <section>
      <TripHeader>
        <div>
          {trip.span}
          <br />
          INTERCHANGES: 0
        </div>
        <TripFacts>
          <div>
            DURATION: {trip.duration}
            <br />
            KEIN PREIS VERFÜGBAR
          </div>
          <button type="button" aria-label="Toggle trip" aria-expanded={shown} onClick={() => setShown(!shown)}>
            <Chevron right={!shown} />
          </button>
        </TripFacts>
      </TripHeader>
      {shown && (
        <Card>
          <LegRow type="button" $tall={!trip.small} aria-expanded={open} onClick={() => setOpen(!open)}>
            <BadgeBox>
              <Badge $color={trip.color} $small={!!trip.small}>{trip.line}</Badge>
            </BadgeBox>
            <RowBody $line={open}>
              {trip.headsign}
              <Chevron right={!open} />
            </RowBody>
          </LegRow>
          {open && (
            <StopList>
              {trip.stops.map(([time, name]) => (
                <StopRow key={name}>
                  <StopIcon />
                  <StopText>
                    <StopTime>{time}</StopTime>
                    <span>{name}</span>
                  </StopText>
                </StopRow>
              ))}
            </StopList>
          )}
        </Card>
      )}
    </section>
  );
}

export default function App() {
  return (
    <>
      <GlobalStyle />
      <Screen>
        <CityMap />
        <StatusBar>
          <StatusGroup $gap={22}>
            <span>11:12 PM</span>
            <span>Thu Aug 4</span>
          </StatusGroup>
          <StatusGroup $gap={6}>
            <Dot />
            <Dot />
            <Dot />
          </StatusGroup>
          <StatusGroup $gap={6} $end>
            <WifiIcon />
            <span>100%</span>
            <BatteryIcon />
          </StatusGroup>
        </StatusBar>
        <Main>
          <MapControls>
            <button type="button" aria-label="Show my location"><LocationIcon /></button>
            <button type="button" aria-label="Settings"><GearIcon /></button>
          </MapControls>
          <Sheet>
            <Handle />
            <Scroll>
              <Form onSubmit={(e) => e.preventDefault()}>
                <Field>
                  <SearchIcon />
                  <FieldInput type="text" aria-label="Start" defaultValue="Karlsruhe Hauptbahnhof (Vorpl.)" />
                </Field>
                <Field>
                  <SearchIcon />
                  <FieldInput type="text" aria-label="Destination" defaultValue="KA Europaplatz/Postgalerie (U)" />
                </Field>
                <WhenRow>
                  <WhenLabel>Departure</WhenLabel>
                  <Pill type="button">Aug 4, 2022</Pill>
                  <Pill type="button">11:12 PM</Pill>
                </WhenRow>
                <SearchButton type="submit">Search for routes</SearchButton>
              </Form>
              <Trips>
                {trips.map((trip) => (
                  <TripSection key={trip.span} trip={trip} />
                ))}
              </Trips>
            </Scroll>
            <TabBar>
              <Tab type="button" $side="start"><BusIcon />Departures</Tab>
              <Tab type="button" $side="center" $active aria-current="page"><WalkIcon />Plan Trip</Tab>
              <Tab type="button" $side="end"><NewsIcon />Ticker</Tab>
            </TabBar>
          </Sheet>
        </Main>
        <Footer>
          <MapsBrand><AppleIcon />Maps</MapsBrand>
          <HomeBar />
          <LegalLink href="#legal">Legal</LegalLink>
        </Footer>
      </Screen>
    </>
  );
}
